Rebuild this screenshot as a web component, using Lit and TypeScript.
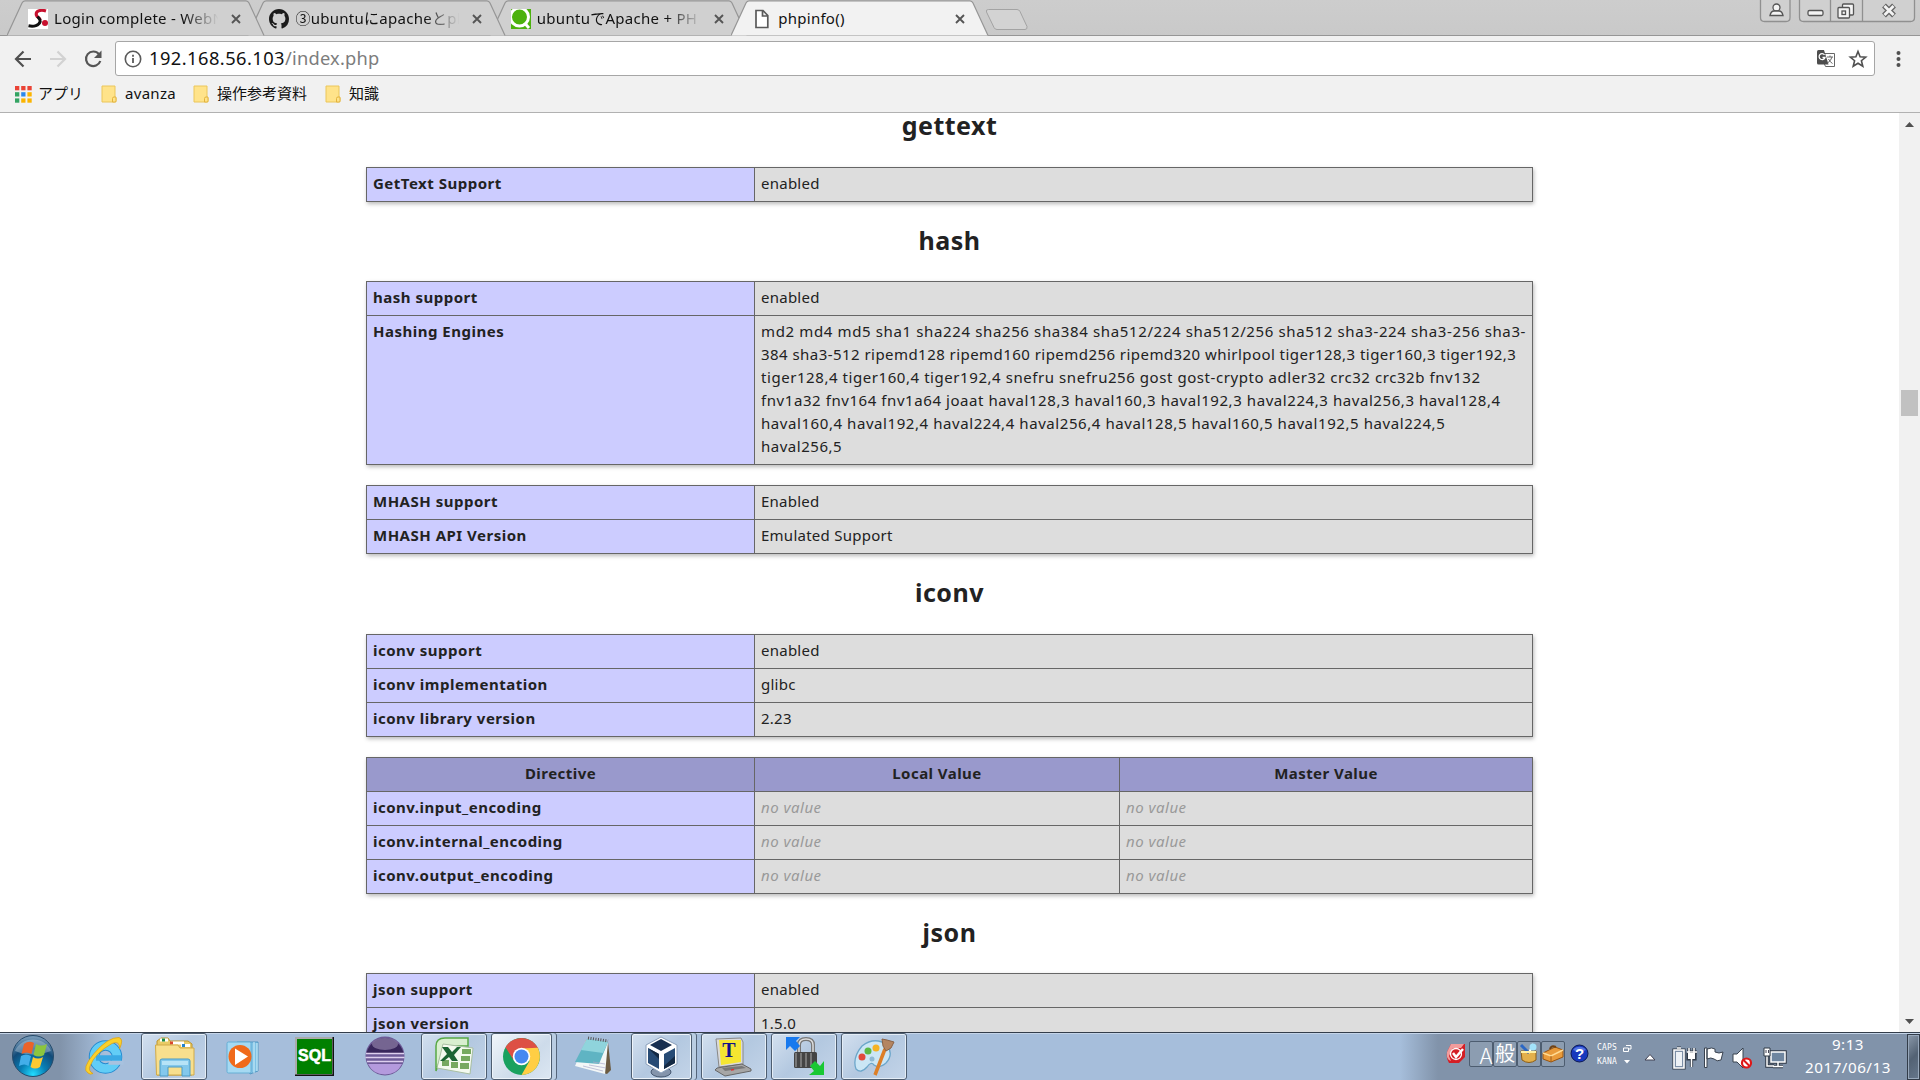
import { LitElement, html, svg, css, TemplateResult } from "lit";
import { customElement, property } from "lit/decorators.js";
import { classMap } from "lit/directives/class-map.js";
import { styleMap } from "lit/directives/style-map.js";

type Row = { name: string; values: string[]; empty?: boolean; engines?: boolean };
type InfoTable = { head?: string[]; rows: Row[] };
type Section = { title: string; cls: string; tables: InfoTable[] };

/* Each line of the hashing list with its tracking in pixels. */
const ENGINES: [string, number][] = [
  ["md2 md4 md5 sha1 sha224 sha256 sha384 sha512/224 sha512/256 sha512 sha3-224 sha3-256 sha3-", 0.63],
  ["384 sha3-512 ripemd128 ripemd160 ripemd256 ripemd320 whirlpool tiger128,3 tiger160,3 tiger192,3", 0.45],
  ["tiger128,4 tiger160,4 tiger192,4 snefru snefru256 gost gost-crypto adler32 crc32 crc32b fnv132", 0.56],
  ["fnv1a32 fnv164 fnv1a64 joaat haval128,3 haval160,3 haval192,3 haval224,3 haval256,3 haval128,4", 0.57],
  ["haval160,4 haval192,4 haval224,4 haval256,4 haval128,5 haval160,5 haval192,5 haval224,5", 0.57],
  ["haval256,5", 0.52],
];

const SECTIONS: Section[] = [
  { title: "gettext", cls: "first", tables: [{ rows: [{ name: "GetText Support", values: ["enabled"] }] }] },
  {
    title: "hash",
    cls: "",
    tables: [
      { rows: [{ name: "hash support", values: ["enabled"] }, { name: "Hashing Engines", values: [""], engines: true }] },
      { rows: [{ name: "MHASH support", values: ["Enabled"] }, { name: "MHASH API Version", values: ["Emulated Support"] }] },
    ],
  },
  {
    title: "iconv",
    cls: "tall",
    tables: [
      {
        rows: [
          { name: "iconv support", values: ["enabled"] },
          { name: "iconv implementation", values: ["glibc"] },
          { name: "iconv library version", values: ["2.23"] },
        ],
      },
      {
        head: ["Directive", "Local Value", "Master Value"],
        rows: ["input", "internal", "output"].map((k) => ({
          name: `iconv.${k}_encoding`,
          values: ["no value", "no value"],
          empty: true,
        })),
      },
    ],
  },
  {
    title: "json",
    cls: "",
    tables: [{ rows: [{ name: "json support", values: ["enabled"] }, { name: "json version", values: ["1.5.0"] }] }],
  },
];

const FONT = css`"Noto Sans", "Noto Sans CJK JP", sans-serif`;

@customElement("php-info")
class PhpInfo extends LitElement {
  static styles = css`
    :host { display: block; width: 1899px; height: 100%; overflow: hidden; background: #fff; color: #222;
      font: 15px/23px ${FONT}; }
    .center { width: 1167px; margin-left: 366px; }
    h2 { margin: 0; height: 79px; font-size: 25px; line-height: 76px; text-align: center; font-weight: 700;
      letter-spacing: 0.5px; }
    h2.first { height: 54px; line-height: 24px; }
    h2.tall { height: 80px; }
    .table { box-sizing: border-box; width: 1167px; border: 1px solid #666; background: #666; display: grid; row-gap: 1px;
      box-shadow: 1px 2px 4px #bbb; }
    .table + .table { margin-top: 20px; }
    .row { display: grid; grid-template-columns: 387px 1fr; column-gap: 1px; }
    .row.three { grid-template-columns: 387px 364px 1fr; }
    .cell { padding: 4px 6px 6px; background: #ddd; white-space: pre; letter-spacing: 0.25px; }
    .name { background: #ccf; font-weight: 700; letter-spacing: 0.5px; }
    .head { background: #99c; font-weight: 700; text-align: center; letter-spacing: 0.45px; }
    .empty { color: #999; font-style: italic; letter-spacing: 0.5px; }
  `;
  render() {
    return html`<div class="center">
      ${SECTIONS.map(
        (s) => html`<h2 class=${s.cls}>${s.title}</h2>
          ${s.tables.map(
            (t) => html`<div class="table">
              ${t.head ? html`<div class="row three">${t.head.map((h) => html`<div class="cell head">${h}</div>`)}</div>` : ""}
              ${t.rows.map(
                (r) => html`<div class=${classMap({ row: true, three: r.values.length > 1 })}>
                  <div class="cell name">${r.name}</div>
                  ${r.engines
                    ? html`<div class="cell">${ENGINES.map(([line, tracking]) => html`<div style=${styleMap({ letterSpacing: `${tracking}px` })}>${line}</div>`)}</div>`
                    : r.values.map((v) => html`<div class=${classMap({ cell: true, empty: !!r.empty })}>${v}</div>`)}
                </div>`
              )}
            </div>`
          )}`
      )}
    </div>`;
  }
}

const favicon: Record<string, TemplateResult> = {
  webmin: html`<svg width="20" height="20" viewBox="0 0 20 20"><rect width="20" height="20" fill="#fff"/>
    <path d="M18 2C12 0 7.500 2.500 8.300 6C9 8.500 12.200 8.500 12.200 11" fill="none" stroke="#c8102e" stroke-width="3"/>
    <path d="M.5 16.800C6 18 11 16.500 12.200 12.500C12.500 10 10.500 9 9.500 7.500" fill="none" stroke="#111" stroke-width="3"/>
    <circle cx="17" cy="14" r="3" fill="#c8102e"/></svg>`,
  github: html`<svg width="20" height="20" viewBox="0 0 16 16"><path fill="#1b1b1b" d="M8 0C3.580 0 0 3.580 0 8c0 3.540 2.290 6.530 5.470 7.590.4.070.55-.17.55-.38 0-.19-.01-.82-.01-1.490-2.010.37-2.530-.49-2.690-.94-.09-.23-.48-.94-.82-1.130-.28-.15-.68-.52-.01-.53.63-.01 1.080.58 1.230.82.72 1.210 1.870.87 2.330.66.07-.52.28-.87.51-1.070-1.780-.2-3.640-.89-3.640-3.950 0-.87.31-1.590.82-2.150-.08-.2-.36-1.020.08-2.120 0 0 .67-.21 2.200.82.64-.18 1.320-.27 2-.27s1.360.09 2 .27c1.530-1.040 2.200-.82 2.200-.82.44 1.100.16 1.920.08 2.120.51.56.82 1.270.82 2.150 0 3.070-1.870 3.750-3.650 3.950.29.25.54.73.54 1.480 0 1.070-.01 1.930-.01 2.200 0 .21.15.46.55.38A8.010 8.010 0 0 0 16 8c0-4.420-3.580-8-8-8z"/></svg>`,
  qiita: html`<svg width="20" height="20" viewBox="0 0 20 20"><rect width="20" height="20" fill="#4cb10d"/>
    <circle cx="8.500" cy="8" r="9" fill="none" stroke="#fff" stroke-width="3"/><path d="M13.500 14l4.500 5" stroke="#fff" stroke-width="3"/></svg>`,
  page: html`<svg width="20" height="20" viewBox="0 0 20 20"><path d="M4 1.500h7l4.800 5v12H4zM10.500 1.500v5.500h5" fill="#fff" stroke="#5a5a5a" stroke-width="1.700"/></svg>`,
};

@customElement("browser-tab")
class BrowserTab extends LitElement {
  @property() label = "";
  @property() icon = "page";
  @property({ type: Boolean }) active = false;
  static styles = css`
    :host { display: block; position: relative; width: 241.4px; height: 36px; flex: none; }
    .shape { position: absolute; left: 0; top: 0; }
    .content { position: relative; display: flex; align-items: center; height: 36px; padding: 2px 0 0 21px; box-sizing: border-box; }
    .label { margin: 0 0 0 6px; width: 166px; height: 24px; white-space: nowrap; font: 15px/22px ${FONT};
      color: #111; letter-spacing: 0.28px; }
    .fade { -webkit-mask-image: linear-gradient(90deg, #000 78%, transparent 99%); }
    .icon { height: 20px; }
    .close { margin-left: 11px; }
  `;
  render() {
    return html`<svg class="shape" width="258" height="36">
        <path d="M0 35.500L15 3Q16 .8 18 .8H239Q241 .8 242 3L257 35.500" fill=${this.active ? "#f2f2f2" : "#d0d0d0"} stroke="#969696" stroke-width="1.200"/>
      </svg>
      <div class="content"><span class="icon">${favicon[this.icon]}</span><span class=${classMap({ label: true, fade: !this.active })}>${this.label}</span>
        <svg class="close" width="10" height="10"><path d="M1 1l8 8M9 1l-8 8" stroke="#555" stroke-width="1.900"/></svg></div>`;
  }
}

const folder = html`<svg width="16" height="18" viewBox="0 0 16 18"><path d="M1 1h13v12h1v4H1z" fill="#ffe38a" stroke="#ebc65a"/><path d="M11.500 17v-3.500q0-1.500 1.500-1.500h2v3.500q0 1.500-1.500 1.500z" fill="#ffe38a" stroke="#e3b33c"/></svg>`;

@customElement("browser-chrome")
class BrowserChrome extends LitElement {
  static styles = css`
    :host { display: block; height: 113px; box-sizing: border-box; background: #f1f1f1; border-bottom: 1px solid #b1b1b1; font-family: ${FONT}; }
    .strip { display: flex; height: 36px; box-sizing: border-box; background: linear-gradient(#cdcdcd, #c9c9c9); padding-left: 7px; box-shadow: inset 0 -1px #969696; }
    .back1 { z-index: 3; } .back2 { z-index: 2; } .back3 { z-index: 1; } .front { z-index: 4; }
    .newtab { margin: 8px 0 0 12px; }
    .controls { margin-left: auto; margin-right: 4px; }
    .bar { display: flex; align-items: center; height: 40px; padding: 5px 14px 0 0; box-sizing: border-box; }
    .nav { display: flex; width: 115px; flex: none; }
    .url { display: flex; align-items: center; box-sizing: border-box; width: 1760px; height: 35px; background: #fff; border: 1px solid #a6a6a6; border-radius: 3px; padding: 0 6px 0 8px; }
    .info { flex: none; }
    .address { margin: -1px 0 0 7px; font-size: 18.3px; line-height: 30px; color: #111; white-space: nowrap; letter-spacing: 0.45px; }
    .path { color: #7d7d7d; letter-spacing: 0.2px; }
    .actions { margin-left: auto; display: flex; gap: 12px; align-items: center; }
    .menu { margin-left: 18px; }
    .marks { display: flex; align-items: center; height: 36px; padding-left: 15px; font-size: 15px; color: #111; line-height: 22px; white-space: nowrap; }
    .mark { display: flex; align-items: center; }
    .apps { width: 86px; } .apps .t { margin-left: 6px; letter-spacing: 0; }
    .av { width: 92px; } .ops { width: 132px; }
    .mark svg { flex: none; } .t { margin: -2px 0 0 8px; }
    .av .t { letter-spacing: 0.3px; }
  `;
  render() {
    const dots = ["#ea4335", "#ea4335", "#ea4335", "#34a463", "#2b88ee", "#fbb400", "#34a463", "#fbb400", "#fbb400"];
    return html`
      <div class="strip">
        <browser-tab class="back1" icon="webmin" label="Login complete - WebN"></browser-tab>
        <browser-tab class="back2" icon="github" label="③ubuntuにapacheとph"></browser-tab>
        <browser-tab class="back3" icon="qiita" label="ubuntuでApache + PH"></browser-tab>
        <browser-tab class="front" icon="page" label="phpinfo()" active></browser-tab>
        <svg class="newtab" width="46" height="24"><path d="M3.500 1.500H32Q34 1.500 35 3.500L42 18.500Q42.500 21.500 40 21.500H12Q10 21.500 9 19.500L1.500 4Q.5 1.500 3.500 1.500z" fill="#d3d3d3" stroke="#a3a3a3"/></svg>
        <svg class="controls" width="157" height="23"><g fill="#d0d0d0" stroke="#909090" stroke-width="1.300">
          <path d="M1.500-1V17.500Q1.500 21.500 5.500 21.500H27Q31 21.500 31 17.500V-1z"/>
          <path d="M40.500-1V17.500Q40.500 21.500 44.500 21.500H151.500Q155.500 21.500 155.500 17.500V-1zM71.500 0V21M103.500 0V21"/></g>
          <g fill="#f4f4f4" stroke="#555" stroke-width="1.300"><circle cx="17.500" cy="7.500" r="3.500"/><path d="M11 15.500Q12 11 15 11h5q3 0 4 4.500z"/>
          <rect x="49" y="10.500" width="15" height="5" rx="1.500"/><rect x="83.500" y="4" width="11" height="11" rx="1"/><rect x="79" y="7.500" width="11.500" height="10.500" rx="1"/><rect x="83" y="11" width="3.500" height="3.500"/></g>
          <path d="M125 5.500l10 10M135 5.500l-10 10" stroke="#666" stroke-width="5.400"/><path d="M125.500 6l9 9M134.500 6l-9 9" stroke="#f4f4f4" stroke-width="2.800"/></svg>
      </div>
      <div class="bar">
        <svg class="nav" width="115" height="36" fill="none" stroke-width="2.200"><path d="M31 18H16.500M23.500 10.500L16 18l7.500 7.500" stroke="#505050"/>
          <path d="M50 18H64.500M57.500 10.500L65 18l-7.500 7.500" stroke="#d2d2d2"/>
          <path d="M99 13.200A7.300 7.300 0 1 0 100.300 20" stroke="#555"/><path d="M101.500 9.500V17H94z" fill="#555"/></svg>
        <div class="url">
          <svg class="info" width="18" height="18"><circle cx="9" cy="9" r="7.700" fill="none" stroke="#5a5a5a" stroke-width="1.600"/><path d="M9 8v5M9 4.800v2" stroke="#5a5a5a" stroke-width="1.800"/></svg>
          <div class="address">192.168.56.103<span class="path">/index.php</span></div>
          <div class="actions">
            <svg width="20" height="20"><path d="M9 4.500h9.500v13H9.500L8 14" fill="#fff" stroke="#666"/><path d="M1 2.500Q1 1 2.500 1H8l4.500 14.500H2.500Q1 15.500 1 14z" fill="#4d4d4d"/><path d="M8.500 5.800A3 3 0 1 0 9 8.500H6.500" fill="none" stroke="#fff" stroke-width="1.300"/><path d="M11 8h6M14 6.500V8M16 8q-1 4-4.500 6M12.500 10q1.500 3 4 4.500" stroke="#666" fill="none"/></svg>
            <svg width="20" height="20"><path d="M10 2.500l2.100 5.200 5.600.4-4.300 3.600 1.400 5.500L10 14.200l-4.800 3 1.400-5.500L2.300 8.100l5.600-.4z" fill="none" stroke="#505050" stroke-width="1.600"/></svg>
          </div>
        </div>
        <svg class="menu" width="10" height="20" fill="#505050"><circle cx="5.500" cy="4" r="2"/><circle cx="5.500" cy="10" r="2"/><circle cx="5.500" cy="16" r="2"/></svg>
      </div>
      <div class="marks">
        <div class="mark apps"><svg width="17" height="17">${dots.map((c, i) => svg`<rect x=${(i % 3) * 6.2} y=${Math.floor(i / 3) * 6.2} width="4.300" height="4.300" fill=${c}/>`)}</svg><span class="t">アプリ</span></div>
        <div class="mark av">${folder}<span class="t">avanza</span></div>
        <div class="mark ops">${folder}<span class="t">操作参考資料</span></div>
        <div class="mark">${folder}<span class="t">知識</span></div>
      </div>`;
  }
}

@customElement("scroll-bar")
class ScrollBar extends LitElement {
  static styles = css`
    :host { display: flex; flex-direction: column; align-items: center; width: 21px; height: 100%; background: #f1f1f1; }
    .thumb { width: 17px; height: 26px; background: #c1c1c1; margin-top: 256px; }
    .down { margin-top: auto; }
  `;
  render() {
    return html`<svg width="21" height="21"><path d="M6 14l4.500-5 4.500 5z" fill="#505050"/></svg>
      <div class="thumb"></div>
      <svg class="down" width="21" height="21"><path d="M6 8l4.500 5 4.500-5z" fill="#505050"/></svg>`;
  }
}

const APPS: { kind: string; art: TemplateResult }[] = [
  { kind: "", art: svg`<circle cx="22.500" cy="22" r="11.500" fill="none" stroke="#258ad0" stroke-width="10.500"/><circle cx="22.500" cy="22" r="11.500" fill="none" stroke="#62cdf6" stroke-width="8.500"/><path d="M13 23H38.500" stroke="#3aa9e4" stroke-width="5.500"/><path d="M25.500 25.800h15v4H25.500z" fill="#a8c2df"/><path d="M5 38Q-2 34 11 18.500Q25 2 36 2.500Q41 4 36.500 14Q37 5 29 8.500Q12 18 7 31Q5 36 10 38.500Q7 40 5 38z" fill="#fbd12b" stroke="#dc9d0c" stroke-width=".7"/>` },
  { kind: "open", art: svg`<path d="M4 5l4-3h7l2 3h18l4 3v31H4z" fill="#eacb66" stroke="#bd942e"/><path d="M7 4h8M18 7h13" stroke="#fff" stroke-width="3"/><path d="M9 4h3" stroke="#198c45" stroke-width="3"/><path d="M17 7h3" stroke="#da472d" stroke-width="3"/><path d="M28 9.500h9" stroke="#fff" stroke-width="3"/><path d="M29 9.500h3" stroke="#2483cd" stroke-width="3"/><path d="M2.500 9H25l2 3h14v27H3.500z" fill="#f8df8d" stroke="#d1aa48"/><path d="M7 40V25q0-2 2-2h26q2 0 2 2v15h-8v-9H15v9z" fill="#83c8ec" stroke="#4a9bc5"/><path d="M9 25h26v4H9z" fill="#b7e3f7"/>` },
  { kind: "", art: svg`<path d="M14 7h21v29l-8 3z" fill="#7fc1e4" stroke="#5298c3"/><path d="M31 7v31M34 8v28" stroke="#d3f1fc"/><rect x="4" y="7" width="24" height="31" rx="1.500" fill="#a5d9f2" stroke="#64aed5"/><circle cx="17" cy="21.500" r="11.500" fill="#f06a1b"/><path d="M12 13.500L25 21.500 12 30z" fill="#fff"/>` },
  { kind: "", art: svg`<rect x="2" y="2" width="39" height="39" fill="#111"/><rect x="2" y="2" width="37.500" height="37.500" fill="#aaa"/><rect x="4" y="4" width="35" height="35" fill="#008000"/><text x="21.500" y="26" font-family="Liberation Sans" font-weight="700" font-size="16" text-anchor="middle" fill="#fff" stroke="#fff" stroke-width=".5">SQL</text>` },
  { kind: "", art: svg`<circle cx="22" cy="21" r="19.500" fill="#6d5a97"/><path d="M3.500 18A19 19 0 0 1 40.500 18z" fill="#38265b"/><ellipse cx="22" cy="9" rx="13" ry="6" fill="#85759f" opacity=".8"/><path d="M3 18.500h38M2.500 22.500h39M4 26.500h36" stroke="#ddcfee" stroke-width="1.600"/><path d="M5 29h34A19 19 0 0 1 5 29z" fill="#b49add"/>` },
  { kind: "open", art: svg`<path d="M3 35V10Q3 2 12 2h23v8H12z" fill="#d9efd0" stroke="#58a945" stroke-width="1.500"/><path d="M10 8l30 4-3 26-33-6z" fill="#f4faef" stroke="#a8bfa2"/><g fill="#77a960"><path d="M29 13h9v5h-9zM28 20h9v5h-9zM27 27h9v6h-9zM18 26h7v6h-7zM9 24h7v6H9z"/></g><path d="M9 11h6l4 5 5-5h4l-7 8 4 6h-6l-3-4-5 4H7l7-7z" fill="#1c6534"/>` },
  { kind: "open stack lit", art: svg`<circle cx="21.500" cy="20.500" r="18.500" fill="#19a15f"/><path d="M5.500 11.250A18.500 18.500 0 0 1 37.500 11.250L38.500 13H21.500L13.500 24z" fill="#dd5044"/><path d="M37.700 11.800A18.500 18.500 0 0 1 21.500 39L29.500 25 21.500 12.500z" fill="#ffce44"/><circle cx="21.500" cy="20.500" r="8.700" fill="#fff"/><circle cx="21.500" cy="20.500" r="7" fill="#4688f1"/>` },
  { kind: "", art: svg`<path d="M13 5l22 2 3 28-4 4-30-9z" fill="#6b5b42"/><path d="M13 5l22 2-3 32-30-8z" fill="#f3f7f7"/><path d="M14 4l21 3-9 22-24-2z" fill="#5fb4c3"/><path d="M14 4l21 3-5 11-22-3z" fill="#8fd4dc"/><path d="M15 3l20 3" stroke="#555" stroke-width="3" stroke-dasharray="1 1.500"/><path d="M16 30l17 3M20 27l12 2M10 31l20 5" stroke="#aac" stroke-width=".7"/>` },
  { kind: "open stack", art: svg`<ellipse cx="21" cy="36" rx="10" ry="5" fill="#8494ab" stroke="#44566f"/><path d="M21 1l16 8v19l-16 9-15-9V9z" fill="#fff" stroke="#8ba0bb"/><path d="M21 3l11 6-11 6-11-6z" fill="#182f50"/><path d="M8 12l11 6v15L8 27zM35 12l-11 6v15l11-6z" fill="#274b75"/><path d="M24 30l11-10v7l-11 6zM8 12l11 6v5z" fill="#142943"/>` },
  { kind: "open", art: svg`<path d="M3 3l25-1 2 4v22l-24 3z" fill="#dadada" stroke="#888"/><path d="M6 4h22v22l-20 3z" fill="#f5e631"/><text x="16" y="20.500" font-family="Liberation Serif" font-weight="700" font-size="20" text-anchor="middle" fill="#10118a">T</text><path d="M4 32l25-4 9 5v2l-26 5-10-6z" fill="#a6a6a6" stroke="#666"/><path d="M9 32l20-2 4 2-21 3z" fill="#777"/><path d="M18 34l3-.5" stroke="#d33" stroke-width="1.500"/>` },
  { kind: "open", art: svg`<path d="M16 18V9q0-6 7-6t7 6v9" fill="none" stroke="#777" stroke-width="4"/><path d="M16 18V9q0-6 7-6t7 6v9" fill="none" stroke="#ddd" stroke-width="1.500"/><rect x="11" y="16" width="23" height="16" rx="1.500" fill="#444"/><path d="M13 17v14M18 17v14M23 17v14M28 17v14" stroke="#777" stroke-width="2"/><path d="M3 1h14l-4 4 4 5-5 5-5-5-4 4z" fill="#1879ee"/><path d="M41 39H26l5-4-4-5 5-5 5 5 4-5z" fill="#19c833"/>` },
  { kind: "open", art: svg`<path d="M9 10Q22 0 34 9q7 9-1 18-7 6-12 2-3-4-7 2-6 7-11 2-4-11 6-23z" fill="#cbe6f5" stroke="#6ca6ca" stroke-width="1.300"/><circle cx="9" cy="21" r="3.500" fill="#e04a3d"/><circle cx="15" cy="15" r="3.500" fill="#5bb845"/><circle cx="23" cy="12" r="3.500" fill="#f4b223"/><circle cx="19" cy="23" r="2.500" fill="#8fb9d4"/><path d="M22 39l10-26" stroke="#dd7f27" stroke-width="3.500"/><path d="M30 10l-1-7 5 1 7 2-3 6-5 3z" fill="#b48561" stroke="#8a6245"/>` },
];

@customElement("task-bar")
class TaskBar extends LitElement {
  static styles = css`
    :host { display: flex; box-sizing: border-box; height: 48px; border-top: 1px solid #333d4a; box-shadow: inset 0 1px #c4d4e8; font-family: ${FONT};
      background: linear-gradient(90deg, #8193aa 0, #8193aa 60px, #a6bedb 105px, #a6bedb 1400px, #8193aa 1438px, #8193aa 100%); }
    .start { width: 71px; flex: none; }
    .apps { display: flex; gap: 4px; }
    .app { width: 66px; height: 47px; box-sizing: border-box; display: flex; justify-content: center; padding-top: 2px; flex: none; }
    .open { background: linear-gradient(135deg, #d3e0ef, #b3c8e0 50%, #c3d4e8); border: 1px solid #4d5d70; border-radius: 3px; box-shadow: inset 0 0 0 1px #e4edf6; }
    .stack { width: 61px; margin-right: 5px; box-shadow: inset 0 0 0 1px #eef4fa, 4px 0 #bacde2, 5px 0 #55657a; }
    .lit { background: linear-gradient(135deg, #f0f5fa, #cddbea 60%, #dce7f2); }
    .tray { margin-left: auto; width: 474px; display: flex; align-items: center; }
    .ime { display: flex; height: 26px; margin: -6px 0 0 3px; }
    .key { width: 24px; box-sizing: border-box; border: 1px solid #4d5d70; border-radius: 2px; background: #8c9db1; color: #fff; display: flex; justify-content: center; align-items: center; font-size: 21px; line-height: 24px; }
    .kanji { font-size: 20px; }
    .letter { padding-left: 10px; font: 300 22px/24px "Noto Sans CJK JP", sans-serif; }
    .up6 { margin-top: -6px; }
    .help { margin-left: 5px; }
    .caps { margin: -4px 0 0 8px; color: #fff; font: 8px/14px "DejaVu Sans Mono", monospace; letter-spacing: 0.15px; width: 38px; }
    .line { display: flex; gap: 6px; align-items: center; }
    .status { margin-left: 5px; }
    .clock { width: 100px; margin: -2px 0 0 6px; text-align: center; color: #fff; font-size: 15.2px; line-height: 23px; letter-spacing: 0.5px; }
    .desk { width: 13px; height: 46px; margin-left: auto; box-sizing: border-box; border: 1px solid #323c49; background: linear-gradient(135deg, #8b99aa, #536274 50%, #66778c); box-shadow: inset 0 0 0 1px #98a8bb; }
  `;
  render() {
    return html`
      <svg class="start" width="71" height="47">
        <defs><radialGradient id="g" cx=".5" cy=".95" r=".9"><stop offset="0" stop-color="#22dcff"/><stop offset=".35" stop-color="#087fb5"/><stop offset=".7" stop-color="#124b79"/><stop offset="1" stop-color="#7296b5"/></radialGradient></defs>
        <circle cx="33" cy="23" r="20.500" fill="url(#g)" stroke="#264b6b"/><path d="M15 18A19 17 0 0 1 51 18Q32 25 15 18z" fill="#b8cad9" opacity=".45"/>
        <path d="M24 11q5-4 10-1l-2.500 11q-5-3-10 0z" fill="#ec6328"/><path d="M36 11q5 3 11 0l-3 11q-5 3-10.500 0z" fill="#8cc63e"/><path d="M21 23q5-3 10 0l-2.500 10q-4-3-9.500 0z" fill="#42aee9"/><path d="M33 24q5 3 10 0l-3 10q-5 3-9.500 0z" fill="#fcca32"/>
      </svg>
      <div class="apps">${APPS.map((a) => html`<div class="app ${a.kind}"><svg width="43" height="43">${a.art}</svg></div>`)}</div>
      <div class="tray">
        <svg class="up6" width="20" height="20"><path d="M5 0h14v13l-6 6H3q-3-5-2-11z" fill="#d41e25"/><path d="M5 0h13l-3 4H7L3 12l2 5Q0 16 1 8z" fill="#f19c9c"/><circle cx="10" cy="10" r="5.500" fill="none" stroke="#fff" stroke-width="1.300"/><path d="M7 9l3 4 7-8" fill="none" stroke="#fff" stroke-width="2.500"/></svg>
        <div class="ime">
          <div class="key letter">A</div><div class="key kanji">般</div>
          <div class="key"><svg width="22" height="24"><path d="M3 9h15v9q-7 5-14 0z" fill="#e3b04c" stroke="#8b5e19"/><path d="M3 3l8 8" stroke="#2c67c4" stroke-width="3"/><path d="M15 2l-4 9" stroke="#fff" stroke-width="2"/><circle cx="15" cy="5" r="3.500" fill="#a2e2fa"/><path d="M3 10h15" stroke="#fff0a4" stroke-width="2"/></svg></div>
          <div class="key"><svg width="22" height="24"><path d="M1 11l12-6 8 3v7L9 20l-8-3z" fill="#e99b3b" stroke="#955411"/><path d="M1 11l8 3 12-6" fill="none" stroke="#ffdb93" stroke-width="1.500"/><path d="M8 7q1-4 6-2" fill="none" stroke="#704215" stroke-width="2"/><path d="M9 14v6" stroke="#9e5c16"/></svg></div>
        </div>
        <svg class="up6 help" width="19" height="19"><circle cx="9.500" cy="9.500" r="8.500" fill="#1738bd" stroke="#0b1855"/><path d="M3 6a8 8 0 0 1 13 0q-6 3-13 0" fill="#718ff0" opacity=".7"/><text x="9.500" y="15" text-anchor="middle" font-family="Liberation Sans" font-weight="700" font-size="15" fill="#fff">?</text></svg>
        <div class="caps"><div class="line">CAPS<svg width="9" height="8" fill="none" stroke="#fff"><path d="M3 1.500h5v3.500H6M.5 4h5v3.500h-5z"/></svg></div><div class="line">KANA<svg width="8" height="6"><path d="M1 1h6L4 4.500z" fill="#fff"/></svg></div></div>
        <svg class="status" width="152" height="44">
          <path d="M5 25l5-5.500L15 25z" fill="#fff" stroke="#445"/>
          <g fill="none" stroke="#303a47" stroke-width="3.200"><path d="M34 15h10v18H34zM37 13h4M47 17h10M49 13v5M54 13v5M48 19h7v5h-7zM51.500 24v8"/></g>
          <path d="M34 15h10v18H34z" fill="#7d8fa6" stroke="#fff" stroke-width="1.600"/><path d="M37 13h4M47 17h10M49 13v5M54 13v5M51.500 24v8" stroke="#fff" stroke-width="1.500"/><rect x="48" y="18" width="7" height="6" fill="#fff"/><rect x="36" y="17" width="6" height="14" fill="#eef2f6"/>
          <path d="M64.500 13h2.500v19.500h-2.500zM67 14q5-2 8 0v3q4 2 8 0l-2 8q-4 2-7-1-3-2-7 0z" fill="#fff" stroke="#39424f"/>
          <path d="M93 19h4l6-6v20l-6-6h-4z" fill="#fff" stroke="#39424f"/><circle cx="106.500" cy="28" r="4.500" fill="#fff" stroke="#df1717" stroke-width="2.200"/><path d="M103.500 25l6 6" stroke="#df1717" stroke-width="2"/>
          <path d="M131 17h14v10h-14zM133 31.500h10M138 27v4M127 20v11h7" fill="none" stroke="#303a47" stroke-width="3.500"/><path d="M131 17h14v10h-14z" fill="#6f86a0" stroke="#fff" stroke-width="1.500"/><path d="M133 31.500h10M138 27v4M127 20v11h7" fill="none" stroke="#fff" stroke-width="1.500"/><path d="M124 13h6v8h-6z" fill="#fff" stroke="#303a47"/><path d="M126 15v3M128.500 15v3" stroke="#445"/>
        </svg>
        <div class="clock">9:13<br>2017/06/13</div>
        <div class="desk"></div>
      </div>`;
  }
}

@customElement("app-root")
class AppRoot extends LitElement {
  static styles = css`
    :host { display: grid; grid-template-rows: 113px 919px 48px; width: 1920px; height: 1080px; overflow: hidden; background: #fff; }
    .view { display: flex; height: 919px; overflow: hidden; }
  `;
  render() {
    return html`<browser-chrome></browser-chrome>
      <div class="view"><php-info></php-info><scroll-bar></scroll-bar></div>
      <task-bar></task-bar>`;
  }
}
